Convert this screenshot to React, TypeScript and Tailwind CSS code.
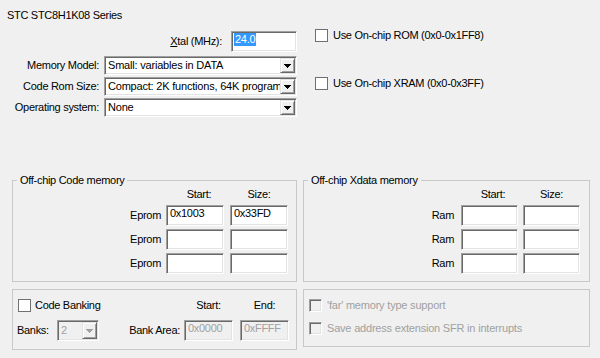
import React from "react";
import clsx from "clsx";

/* ─── classic Win32 bevels ─── */
const sunken =
  "border border-t-[#a0a0a0] border-l-[#a0a0a0] border-r-white border-b-white shadow-[inset_1px_1px_0_#696969,inset_-1px_-1px_0_#e3e3e3]";
const raised =
  "border border-t-[#e3e3e3] border-l-[#e3e3e3] border-r-[#696969] border-b-[#696969] shadow-[inset_1px_1px_0_#ffffff,inset_-1px_-1px_0_#a0a0a0]";

function Arrow({ disabled }: { disabled?: boolean }) {
  return (
    <svg width="7" height="4" viewBox="0 0 7 4" fill={disabled ? "#a0a0a0" : "#000000"}>
      <path d="M0 0h7v1H0zM1 1h5v1H1zM2 2h3v1H2zM3 3h1v1H3z" />
    </svg>
  );
}

function TextBox({
  value,
  className,
  disabled,
  selected,
}: {
  value?: string;
  className?: string;
  disabled?: boolean;
  selected?: boolean;
}) {
  return (
    <div
      className={clsx(
        "flex h-[21px] shrink-0 overflow-hidden whitespace-nowrap pl-[2px] pt-[1px]",
        sunken,
        disabled ? "bg-[#f0f0f0] text-[#a0a0a0]" : "bg-white",
        className
      )}
    >
      {value && (
        <span className={clsx("h-[13px] pl-[1px]", selected && "bg-[#3399ff] pr-[1px] text-white")}>
          {value}
        </span>
      )}
    </div>
  );
}

function Combo({ value, className, disabled }: { value: string; className?: string; disabled?: boolean }) {
  return (
    <div
      className={clsx(
        "flex shrink-0",
        sunken,
        disabled ? "bg-[#f0f0f0] text-[#a0a0a0]" : "bg-white",
        className
      )}
    >
      <span className="flex min-w-0 flex-1 items-center overflow-hidden whitespace-nowrap pl-[3px] tracking-[-0.2px]">
        {value}
      </span>
      <span className={clsx("my-[1px] mr-[1px] flex w-[15px] shrink-0 items-center justify-center bg-[#f0f0f0]", raised)}>
        <Arrow disabled={disabled} />
      </span>
    </div>
  );
}

function Check({ classic }: { classic?: boolean }) {
  return classic ? (
    <span className={clsx("block h-[13px] w-[13px] shrink-0 bg-[#f0f0f0]", sunken)} />
  ) : (
    <span className="block h-[13px] w-[13px] shrink-0 border border-[#707070] bg-white" />
  );
}

function SelectRow({ label, value, className }: { label: string; value: string; className?: string }) {
  return (
    <div className={clsx("flex h-[19px] items-center", className)}>
      <span className="w-[99px] shrink-0 text-right">{label}</span>
      <Combo value={value} className="ml-[5px] h-[19px] w-[193px]" />
    </div>
  );
}

function MemRow({ label, start, size, variant }: { label: string; start?: string; size?: string; variant: "code" | "xdata" }) {
  const code = variant === "code";
  return (
    <div className={clsx("flex h-[21px] items-center justify-end", code ? "pr-[8px]" : "pr-[9px]")}>
      <span className={code ? "mr-[5px]" : "mr-[7px]"}>{label}</span>
      <TextBox value={start} className={code ? "w-[58px]" : "w-[57px]"} />
      <TextBox value={size} className={code ? "ml-[6px] w-[58px]" : "ml-[5px] w-[57px]"} />
    </div>
  );
}

export default function App() {
  return (
    <div className="h-[358px] w-[600px] overflow-hidden bg-[#f0f0f0] font-['Liberation_Sans',Arial,sans-serif] text-[11px] leading-[13px] tracking-[-0.3px] text-black select-none">
      {/* device name */}
      <div className="h-[29px] pl-[7px] pt-[9px]">STC STC8H1K08 Series</div>

      {/* top options */}
      <div className="flex h-[89px]">
        <div className="flex w-[297px] flex-col">
          <div className="mt-[2px] flex h-[21px] items-center justify-end">
            <span className="mr-[9px]">
              <u>X</u>tal (MHz):
            </span>
            <TextBox value="24.0" selected className="w-[66px]" />
          </div>
          <SelectRow className="mt-[4px]" label="Memory Model:" value="Small: variables in DATA" />
          <SelectRow className="mt-[2px]" label="Code Rom Size:" value="Compact: 2K functions, 64K program" />
          <SelectRow className="mt-[2px]" label="Operating system:" value="None" />
        </div>

        <div className="flex flex-col pl-[18px]">
          <label className="flex h-[13px] items-center">
            <Check />
            <span className="ml-[5px]">Use On-chip ROM (0x0-0x1FF8)</span>
          </label>
          <label className="mt-[35px] flex h-[13px] items-center">
            <Check />
            <span className="ml-[5px]">Use On-chip XRAM (0x0-0x3FF)</span>
          </label>
        </div>
      </div>

      {/* off-chip memory */}
      <div className="mt-[56px] flex gap-[6px] pl-[12px]">
        <fieldset className="w-[285px] border border-[#c8c8c8] pb-[7px]">
          <legend className="ml-[4px] px-[3px] leading-[13px]">Off-chip Code memory</legend>
          <div className="flex h-[14px] items-center justify-end pr-[8px]">
            <span className="w-[58px] pl-[8px] text-center">Start:</span>
            <span className="ml-[6px] w-[58px] text-center">Size:</span>
          </div>
          <div className="mt-[4px] flex flex-col gap-[3px]">
            <MemRow variant="code" label="Eprom" start="0x1003" size="0x33FD" />
            <MemRow variant="code" label="Eprom" />
            <MemRow variant="code" label="Eprom" />
          </div>
        </fieldset>

        <fieldset className="w-[287px] border border-[#c8c8c8] pb-[7px]">
          <legend className="ml-[4px] px-[3px] leading-[13px]">Off-chip Xdata memory</legend>
          <div className="flex h-[14px] items-center justify-end pr-[9px]">
            <span className="w-[57px] pl-[7px] text-center">Start:</span>
            <span className="ml-[5px] w-[57px] text-center">Size:</span>
          </div>
          <div className="mt-[4px] flex flex-col gap-[3px]">
            <MemRow variant="xdata" label="Ram" />
            <MemRow variant="xdata" label="Ram" />
            <MemRow variant="xdata" label="Ram" />
          </div>
        </fieldset>
      </div>

      {/* banking / far memory */}
      <div className="mt-[7px] flex items-start gap-[6px] pl-[12px]">
        <div className="h-[61px] w-[285px] border border-[#c8c8c8] pt-[9px]">
          <div className="flex h-[13px] items-center pl-[5px] pr-[7px]">
            <Check />
            <span className="ml-[4px] flex-1">Code Banking</span>
            <span className="w-[49px] text-center">Start:</span>
            <span className="ml-[7px] w-[49px] text-center">End:</span>
          </div>
          <div className="mt-[8px] flex h-[21px] items-center pl-[4px] pr-[7px]">
            <span className="w-[40px] shrink-0">Banks:</span>
            <Combo value="2" disabled className="h-[21px] w-[42px]" />
            <span className="mr-[4px] flex-1 text-right">Bank Area:</span>
            <TextBox value="0x0000" disabled className="w-[49px]" />
            <TextBox value="0xFFFF" disabled className="ml-[7px] w-[49px]" />
          </div>
        </div>

        <div className="h-[58px] w-[287px] border border-[#c8c8c8] pl-[5px] pt-[9px] tracking-[-0.2px] text-[#a0a0a0]">
          <div className="flex h-[13px] items-center">
            <Check classic />
            <span className="ml-[5px]">'far' memory type support</span>
          </div>
          <div className="mt-[10px] flex h-[13px] items-center">
            <Check classic />
            <span className="ml-[5px]">Save address extension SFR in interrupts</span>
          </div>
        </div>
      </div>
    </div>
  );
}
